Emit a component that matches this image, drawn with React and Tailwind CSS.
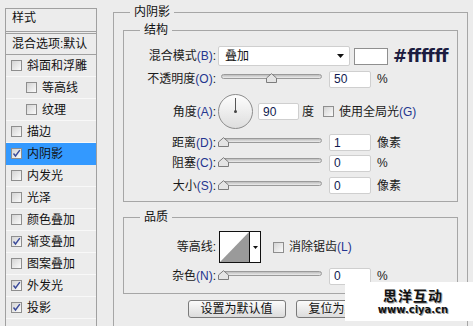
import React from "react";

function Check({ checked }) {
  return (
    <div className="w-[11px] h-[11px] border border-[#8e8e8e] bg-gradient-to-br from-[#d4d4d4] to-[#fbfbfb] flex items-center justify-center shrink-0">
      {checked && (
        <svg width="9" height="9" viewBox="0 0 9 9">
          <path d="M1.5 4.5 L3.5 7 L7.8 1.2" fill="none" stroke="#3a4a9a" strokeWidth="1.4" />
        </svg>
      )}
    </div>
  );
}

function Item({ label, checked, indent, active }) {
  return (
    <div
      className={
        "h-[22px] flex items-center gap-[5px] border-b whitespace-nowrap " +
        (active ? "bg-[#3399ff] border-[#3399ff]" : "border-[#f8f8f8]") +
        (indent ? " pl-[20px]" : " pl-[5px]")
      }
    >
      <Check checked={checked} />
      <span className="text-[12px] text-[#111]">{label}</span>
    </div>
  );
}

function Mn({ children }) {
  return <span className="text-[#24358f]">{children}</span>;
}

function Label({ cn, m }) {
  return (
    <div className="w-[92px] text-right text-[12px] text-[#1a1a1a] whitespace-nowrap shrink-0">
      {cn}
      {m && <Mn>({m})</Mn>}:
    </div>
  );
}

function Slider({ thumb }) {
  return (
    <div className="relative w-[104px] h-[14px] shrink-0">
      <div className="absolute left-[3px] right-0 top-[2px] h-[5px] rounded-full border border-[#9a9a9a] bg-gradient-to-b from-[#bdbdbd] to-[#ededed]" />
      <svg className={"absolute top-[1px] " + thumb} width="11" height="10" viewBox="0 0 11 10">
        <path d="M0.5 9.5 V5 L5.5 0.7 L10.5 5 V9.5 Z" fill="#e4e4e4" stroke="#7c7c7c" />
      </svg>
    </div>
  );
}

function Input({ value, w = "w-[42px]" }) {
  return (
    <div className={"h-[17px] bg-white border border-[#cfcfcf] rounded-[2px] flex items-center pl-[4px] text-[12px] text-[#101a50] shrink-0 " + w}>
      {value}
    </div>
  );
}

function SliderRow({ cn, m, thumb, value, unit, h }) {
  return (
    <div className={"flex items-center " + h}>
      <Label cn={cn} m={m} />
      <div className="ml-[2px]">
        <Slider thumb={thumb} />
      </div>
      <div className="ml-[7px]">
        <Input value={value} />
      </div>
      <span className="ml-[6px] text-[12px] text-[#1a1a1a]">{unit}</span>
    </div>
  );
}

function Group({ title, className, children }) {
  return (
    <div className={"relative border border-[#a6a6a6] " + className}>
      <span className="absolute top-[-9px] left-[16px] px-[4px] bg-[#ececec] text-[12px] leading-[16px] text-[#111]">
        {title}
      </span>
      {children}
    </div>
  );
}

export default function App() {
  const items = [
    { label: "斜面和浮雕", checked: false },
    { label: "等高线", checked: false, indent: true },
    { label: "纹理", checked: false, indent: true },
    { label: "描边", checked: false },
    { label: "内阴影", checked: true, active: true },
    { label: "内发光", checked: false },
    { label: "光泽", checked: false },
    { label: "颜色叠加", checked: false },
    { label: "渐变叠加", checked: true },
    { label: "图案叠加", checked: false },
    { label: "外发光", checked: true },
    { label: "投影", checked: true },
  ];
  return (
    <div className="relative w-[473px] h-[326px] overflow-hidden bg-[#ececec] flex font-['Liberation_Sans','Noto_Sans_CJK_SC',sans-serif] leading-none">
      {/* left styles list */}
      <div className="ml-[5px] mt-[8px] w-[92px] h-[330px] border-l border-t border-r border-[#a0a0a0] shrink-0">
        <div className="h-[22px] pl-[6px] pt-[2px] text-[12px] leading-[14px] text-[#111]">样式</div>
        <div className="h-[3px] border-t border-b border-[#a0a0a0]" />
        <div className="h-[21px] border-b border-[#a0a0a0] pl-[6px] flex items-center text-[12px] text-[#111] whitespace-nowrap overflow-hidden">
          混合选项:默认
        </div>
        {items.map((it) => (
          <Item key={it.label} {...it} />
        ))}
      </div>

      {/* right panel */}
      <Group title="内阴影" className="ml-[16px] mt-[12px] w-[355px] h-[330px] shrink-0">
        <div className="px-[9px] pt-[17px]">
          <Group title="结构" className="h-[172px]">
            <div className="pt-[13px]">
              <div className="flex items-center h-[24px]">
                <Label cn="混合模式" m="B" />
                <div className="ml-[2px] w-[132px] h-[20px] bg-white border border-[#cfcfcf] rounded-[2px] flex items-center justify-between pl-[6px] pr-[5px] text-[12px] text-[#111]">
                  <span>叠加</span>
                  <svg width="7" height="4" viewBox="0 0 7 4">
                    <path d="M0 0 H7 L3.5 4 Z" fill="#111" />
                  </svg>
                </div>
                <div className="ml-[4px] w-[34px] h-[17px] bg-white border border-[#8f8f8f]" />
                <span className="ml-[5px] font-['DejaVu_Sans',sans-serif] font-bold text-[17px] text-[#1c1c40]">#ffffff</span>
              </div>
              <SliderRow cn="不透明度" m="O" thumb="left-[48px]" value="50" unit="%" h="h-[22px]" />
              <div className="flex items-center h-[43px]">
                <Label cn="角度" m="A" />
                <div className="ml-[2px] w-[35px] h-[35px] rounded-full border border-[#8c8c8c] bg-gradient-to-b from-[#fdfdfd] to-[#dedede] relative shrink-0">
                  <div className="absolute left-[16px] top-[3px] w-[1px] h-[14px] bg-[#555]" />
                  <div className="absolute left-[15px] top-[15px] w-[3px] h-[3px] rounded-full bg-[#444]" />
                </div>
                <div className="ml-[5px]">
                  <Input value="90" w="w-[41px]" />
                </div>
                <span className="ml-[3px] text-[12px] text-[#1a1a1a]">度</span>
                <div className="ml-[9px] flex items-center gap-[5px]">
                  <Check checked={false} />
                  <span className="text-[12px] text-[#1a1a1a] whitespace-nowrap">
                    使用全局光<Mn>(G)</Mn>
                  </span>
                </div>
              </div>
              <SliderRow cn="距离" m="D" thumb="left-[0px]" value="1" unit="像素" h="h-[19px]" />
              <SliderRow cn="阻塞" m="C" thumb="left-[0px]" value="0" unit="%" h="h-[22px]" />
              <SliderRow cn="大小" m="S" thumb="left-[0px]" value="0" unit="像素" h="h-[23px]" />
            </div>
          </Group>

          <Group title="品质" className="mt-[15px] h-[77px]">
            <div className="pt-[12px]">
              <div className="flex items-center h-[34px]">
                <Label cn="等高线" />
                <div className="ml-[3px] w-[42px] h-[32px] border border-[#111] bg-white flex shrink-0">
                  <svg width="29" height="30" viewBox="0 0 29 30" className="block">
                    <path d="M0 30 L29 0 V30 Z" fill="#9a9a9a" />
                  </svg>
                  <div className="flex-1 border-l border-[#111] flex items-center justify-center">
                    <svg width="5" height="3" viewBox="0 0 5 3">
                      <path d="M0 0 H5 L2.5 3 Z" fill="#111" />
                    </svg>
                  </div>
                </div>
                <div className="ml-[12px] flex items-center gap-[5px]">
                  <Check checked={false} />
                  <span className="text-[12px] text-[#1a1a1a] whitespace-nowrap">
                    消除锯齿<Mn>(L)</Mn>
                  </span>
                </div>
              </div>
              <SliderRow cn="杂色" m="N" thumb="left-[0px]" value="0" unit="%" h="h-[24px]" />
            </div>
          </Group>

          <div className="mt-[6px] flex justify-center gap-[10px]">
            <div className="w-[98px] h-[18px] rounded-[3px] border border-[#7a7a7a] bg-gradient-to-b from-[#fbfbfb] to-[#dcdcdc] flex items-center justify-center text-[12px] text-[#111]">
              设置为默认值
            </div>
            <div className="w-[98px] h-[18px] rounded-[3px] border border-[#7a7a7a] bg-gradient-to-b from-[#fbfbfb] to-[#dcdcdc] flex items-center justify-center text-[12px] text-[#111]">
              复位为默认值
            </div>
          </div>
        </div>
      </Group>

      {/* watermark */}
      <div className="absolute left-[345px] top-[282px] w-[128px] h-[39px] bg-white flex flex-col items-center justify-center gap-[3px] pl-[8px]">
        <span className="font-['Noto_Sans_CJK_SC',sans-serif] font-bold text-[14px] leading-[14px] text-[#111] tracking-[1px] [text-shadow:1px_1px_0_#aaa]">
          思洋互动
        </span>
        <span className="font-['DejaVu_Sans',sans-serif] font-bold text-[10px] leading-[10px] text-[#111] [text-shadow:1px_1px_0_#999]">
          www.ciya.cn
        </span>
      </div>
    </div>
  );
}
